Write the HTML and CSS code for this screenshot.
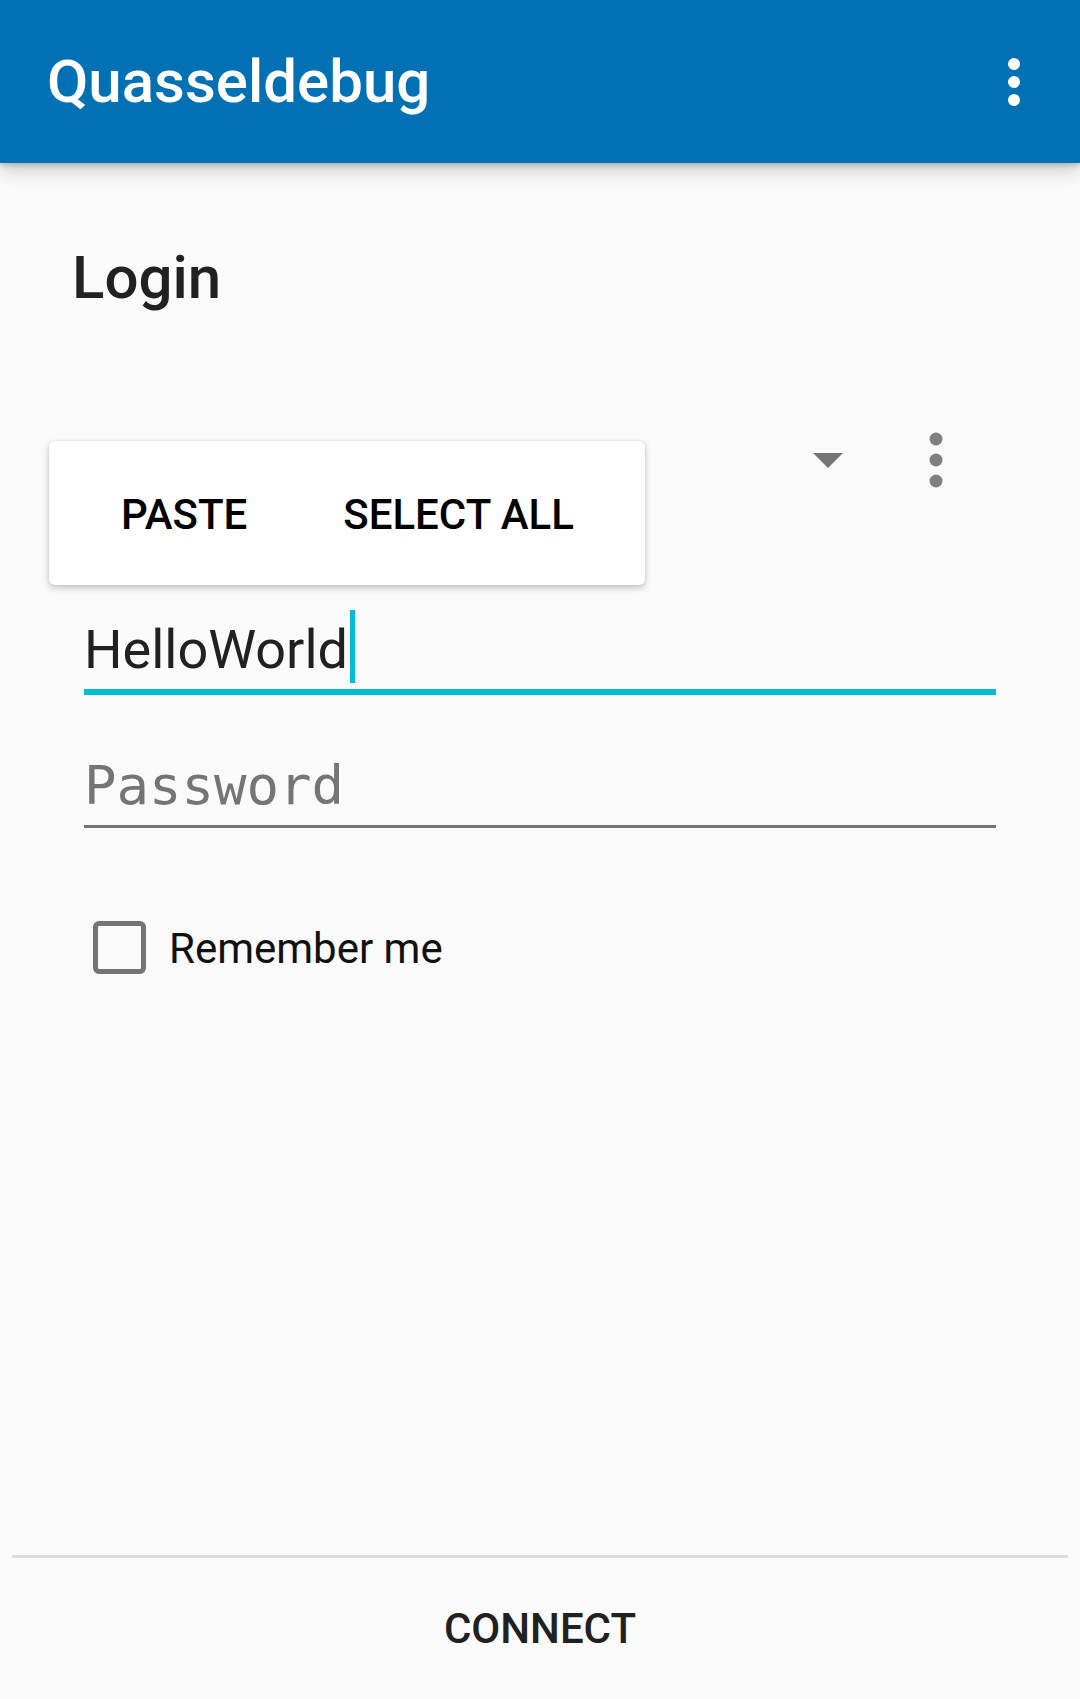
FILE: index.html
```html
<!DOCTYPE html>
<html lang="en">
<head>
<meta charset="utf-8">
<title>Quasseldebug</title>
<link rel="stylesheet" href="styles.css">
</head>
<body>
<header class="appbar">
  <h1 class="appbar-title">Quasseldebug</h1>
  <svg class="appbar-more" width="12" height="48" viewBox="0 0 12 48" aria-label="More options">
    <circle cx="6" cy="6" r="6" fill="#fff"/>
    <circle cx="6" cy="24" r="6" fill="#fff"/>
    <circle cx="6" cy="42" r="6" fill="#fff"/>
  </svg>
</header>
<main class="content">
  <h2 class="page-title">Login</h2>
  <div class="form">
    <div class="account-row">
      <svg class="spinner-arrow" width="30" height="15" viewBox="0 0 30 15">
        <polygon points="0,0 30,0 15,15" fill="#757575"/>
      </svg>
      <svg class="account-more" width="14" height="56" viewBox="0 0 14 56">
        <circle cx="7" cy="7" r="6.5" fill="#808080"/>
        <circle cx="7" cy="28" r="6.5" fill="#808080"/>
        <circle cx="7" cy="49" r="6.5" fill="#808080"/>
      </svg>
    </div>
    <div class="field field-focused">
      <span class="field-text">HelloWorld</span><span class="cursor"></span>
    </div>
    <div class="field field-idle">
      <span class="field-hint">Password</span>
    </div>
    <label class="check-row">
      <span class="checkbox"></span>
      <span class="check-label">Remember me</span>
    </label>
    <div class="float-toolbar">
      <span class="float-action">PASTE</span>
      <span class="float-action">SELECT ALL</span>
    </div>
  </div>
</main>
<footer class="bottom-bar">
  <div class="divider"></div>
  <div class="connect">CONNECT</div>
</footer>
</body>
</html>
```
FILE: styles.css
```css
html, body {
  margin: 0;
  padding: 0;
}
body {
  width: 1080px;
  height: 1699px;
  background: #fafafa;
  font-family: Roboto, "Noto Sans", "Liberation Sans", sans-serif;
  display: flex;
  flex-direction: column;
  overflow: hidden;
}
.appbar {
  position: relative;
  z-index: 2;
  height: 163px;
  flex: none;
  background: #0171b4;
  display: flex;
  align-items: center;
  padding: 0 60px 0 47px;
  box-shadow: 0 6px 18px rgba(0, 0, 0, 0.22), 0 2px 5px rgba(0, 0, 0, 0.18);
}
.appbar-title {
  margin: 0;
  flex: 1;
  color: #fff;
  font-size: 60px;
  font-weight: 500;
  line-height: 70px;
}
.appbar-more {
  display: block;
}
.content {
  flex: 1;
  display: flex;
  flex-direction: column;
}
.page-title {
  margin: 80px 0 0 72px;
  font-size: 60px;
  font-weight: 500;
  line-height: 70px;
  color: #212121;
}
.form {
  position: relative;
  margin-top: 99px;
  padding: 0 84px;
}
.account-row {
  height: 96px;
  display: flex;
  align-items: center;
  justify-content: flex-end;
  padding-right: 53px;
}
.spinner-arrow {
  display: block;
  margin-right: 86px;
}
.account-more {
  display: block;
}
.field {
  display: flex;
}
.field-focused {
  margin-top: 102px;
  border-bottom: 6px solid #00bcd4;
}
.field-text {
  font-size: 54px;
  line-height: 79px;
  color: #212121;
}
.cursor {
  width: 5px;
  height: 73px;
  margin-left: 2px;
  background: #00bcd4;
}
.field-idle {
  margin-top: 51px;
  border-bottom: 3px solid #757575;
}
.field-hint {
  font-family: "DejaVu Sans Mono", "Liberation Mono", monospace;
  font-size: 54px;
  line-height: 79px;
  color: #757575;
}
.check-row {
  display: flex;
  align-items: center;
  margin-top: 93px;
  padding-left: 9px;
}
.checkbox {
  box-sizing: border-box;
  width: 53px;
  height: 53px;
  border: 5.5px solid #757575;
  border-radius: 6px;
  flex: none;
}
.check-label {
  margin-left: 23px;
  padding-top: 3px;
  font-size: 42px;
  line-height: 50px;
  color: #111;
}
.float-toolbar {
  position: absolute;
  top: 29px;
  left: 49px;
  width: 596px;
  height: 144px;
  box-sizing: border-box;
  background: #fff;
  border-radius: 6px;
  box-shadow: 0 3px 7px rgba(0, 0, 0, 0.22), 0 0 3px rgba(0, 0, 0, 0.08);
  display: flex;
  align-items: center;
  padding: 4px 0 0 72px;
  gap: 96px;
}
.float-action {
  font-size: 42px;
  font-weight: 500;
  line-height: 50px;
  color: #000;
}
.bottom-bar {
  flex: none;
}
.divider {
  height: 3px;
  margin: 0 12px;
  background: #dcdcdc;
}
.connect {
  height: 141px;
  line-height: 141px;
  text-align: center;
  font-size: 42px;
  font-weight: 500;
  color: #212121;
}
```
